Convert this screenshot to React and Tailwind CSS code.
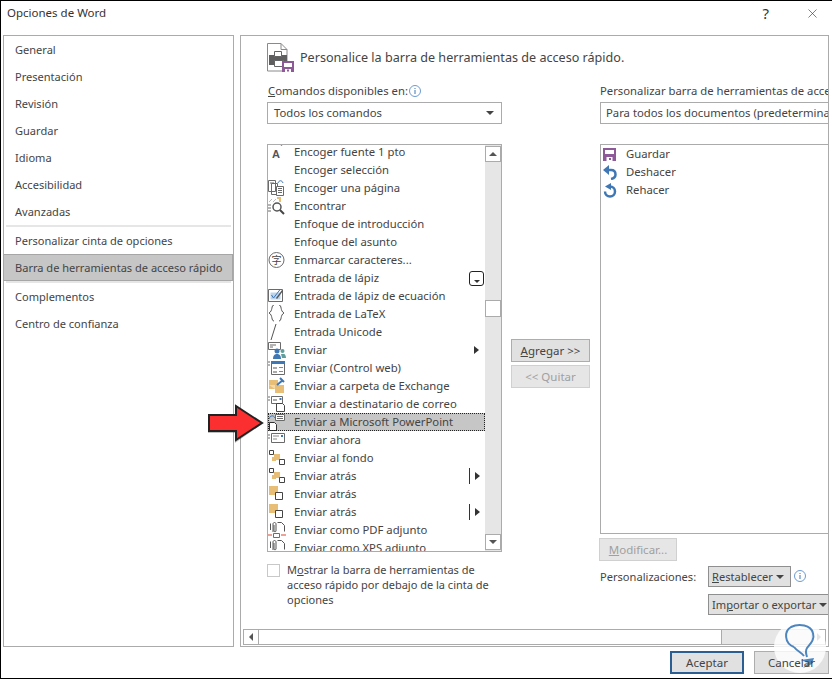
import { X } from 'lucide-react';

const navTop = ['General', 'Presentación', 'Revisión', 'Guardar', 'Idioma', 'Accesibilidad', 'Avanzadas'];

const rows = [
  { icon: 'fontDown', label: 'Encoger fuente 1 pto' },
  { label: 'Encoger selección' },
  { icon: 'shrink', label: 'Encoger una página' },
  { icon: 'find', label: 'Encontrar' },
  { label: 'Enfoque de introducción' },
  { label: 'Enfoque del asunto' },
  { icon: 'char', label: 'Enmarcar caracteres...' },
  { label: 'Entrada de lápiz', extra: 'drop' },
  { icon: 'equation', label: 'Entrada de lápiz de ecuación' },
  { icon: 'latex', label: 'Entrada de LaTeX' },
  { icon: 'slash', label: 'Entrada Unicode' },
  { icon: 'people', label: 'Enviar', extra: 'arrow' },
  { icon: 'form', label: 'Enviar (Control web)' },
  { icon: 'pin', label: 'Enviar a carpeta de Exchange' },
  { icon: 'docs', label: 'Enviar a destinatario de correo' },
  { icon: 'ppt', label: 'Enviar a Microsoft PowerPoint', active: true },
  { icon: 'now', label: 'Enviar ahora' },
  { icon: 'back', label: 'Enviar al fondo' },
  { icon: 'back', label: 'Enviar atrás', extra: 'split' },
  { icon: 'back2', label: 'Enviar atrás' },
  { icon: 'back2', label: 'Enviar atrás', extra: 'split' },
  { icon: 'pdf', label: 'Enviar como PDF adjunto' },
  { icon: 'xps', label: 'Enviar como XPS adjunto' },
];

function RowIcon({ name }) {
  const g = '#6a6a6a';
  const tan = '#e8bd76';
  const blue = '#3f77b5';
  if (!name) return <span className="w-[18px] h-[18px]" />;
  return (
    <svg width="18" height="18" viewBox="0 0 18 18" fill="none" className="block">
      {name === 'fontDown' && (
        <>
          <text x="4" y="15" fontSize="11" fontWeight="700" fill="#555" fontFamily="Liberation Sans, sans-serif">A</text>
          <path d="M11.500 1h4l-2 2z" fill={blue} />
        </>
      )}
      {name === 'shrink' && (
        <>
          <path d="M.5 1.500h7v11h-7z M3.500 4.500h6v11h-6z" stroke={g} fill="#fff" />
          <path d="M8.500 7.500h7v9h-7z" stroke={g} fill="#fff" />
          <path d="M10 9.500h4M10 11.500h4M10 13.500h4M2 4h4" stroke={g} />
          <path d="M10 4c1-3 4-3 5 0" stroke={blue} />
        </>
      )}
      {name === 'find' && (
        <>
          <path d="M1 5l3-3M5 5l3-3" stroke="#bbb" />
          <path d="M9 1l3 0 0 4" stroke={tan} strokeWidth="2" />
          <path d="M0 8h3M0 11h3M0 14h3" stroke={g} />
          <circle cx="9" cy="10" r="4" stroke="#555" fill="#fff" strokeWidth="1.500" />
          <path d="M12 13l4 4" stroke="#444" strokeWidth="2" />
        </>
      )}
      {name === 'char' && (
        <>
          <circle cx="8.500" cy="9" r="7.500" stroke={g} />
          <text x="3.500" y="13" fontSize="10" fill="#444" fontFamily="Noto Sans CJK SC, sans-serif">字</text>
        </>
      )}
      {name === 'equation' && (
        <>
          <path d="M.5 2.500h14v12H.5z" stroke={g} fill="#fff" />
          <path d="M2.500 5.500h10v7h-10z" fill="#bcd4ec" />
          <path d="M3.500 8l2 3 7-9" stroke={blue} />
          <path d="M8 11l6-8 1 1-6 8z" fill="#555" />
        </>
      )}
      {name === 'latex' && (
        <path d="M6 1C3 1 5 7 1 9c4 2 2 8 5 8M11 1c3 0 1 6 5 8-4 2-2 8-5 8" stroke="#555" transform="translate(0 -1)" />
      )}
      {name === 'slash' && <path d="M8 1L3 17" stroke="#555" />}
      {name === 'people' && (
        <>
          <path d="M.5 1.500h12v7H.5z" stroke={g} fill="#fff" />
          <path d="M2 4h6M2 6h3" stroke={g} />
          <circle cx="9" cy="10" r="2.500" fill={blue} />
          <path d="M5 18c0-4 2-5 4-5s4 1 4 5z" fill={blue} />
          <circle cx="14.500" cy="10" r="2" fill="#5f9e9a" />
          <path d="M13 13h3c1 0 2 2 2 4h-4z" fill="#5f9e9a" />
        </>
      )}
      {name === 'form' && (
        <>
          <path d="M0 3h2M0 6h2" stroke={g} />
          <path d="M3.500 2.500h13v13h-13z" stroke={g} fill="#fff" />
          <path d="M3 2h14v3H3z" fill={blue} />
          <path d="M5 8h4v2H5zM5 12h4v2H5z" fill="#aaa" />
          <path d="M11 8.500h4M11 12.500h4" stroke="#888" />
        </>
      )}
      {name === 'pin' && (
        <>
          <path d="M1 3h9v5h6v8H7v-4H1z" fill={tan} />
          <path d="M1 8l6 4V8z" fill="#f3d9aa" />
          <path d="M9 8l6-5M12 1l4 4" stroke={blue} strokeWidth="2" />
        </>
      )}
      {name === 'docs' && (
        <>
          <path d="M0 2h2M0 5h2" stroke={g} />
          <path d="M3.500 1.500h11v7h-11z" stroke={g} fill="#fff" />
          <path d="M5 4h4v2H5z" fill="#aaa" />
          <path d="M11.500 3h2v2h-2z" fill={blue} />
          <path d="M8.500 8.500h6l2 2v6h-8z" stroke="#444" fill="#fff" />
        </>
      )}
      {name === 'ppt' && (
        <>
          <path d="M7.500 1.500h9v6h-9z" stroke={g} fill="#fff" />
          <path d="M9 3.500h6M9 5.500h6" stroke={g} />
          <path d="M1 6c1-4 5-4 6-1" stroke={blue} />
          <path d="M1.500 9.500h5l2 2v6h-7z" stroke="#333" fill="#fff" />
        </>
      )}
      {name === 'now' && (
        <>
          <path d="M0 4h2M0 7h2" stroke={g} />
          <path d="M3.500 2.500h13v9h-13z" stroke={g} fill="#fff" />
          <path d="M5 5h6M5 8h4" stroke="#888" />
          <path d="M13 4h2v2h-2z" fill={blue} />
        </>
      )}
      {name === 'back' && (
        <>
          <path d="M1.500 1.500h4v4h-4z" stroke="#444" fill="#fff" />
          <path d="M6 5h6v6H6z" fill={tan} />
          <path d="M4 8h4v4H4z" fill={tan} />
          <path d="M11.500 10.500h5v5h-5z" stroke="#444" fill="#fff" />
        </>
      )}
      {name === 'back2' && (
        <>
          <path d="M1 1h9v9H1z" fill={tan} />
          <path d="M7.500 7.500h7v7h-7z" stroke="#444" fill="#fff" />
        </>
      )}
      {(name === 'pdf' || name === 'xps') && (
        <>
          <path d="M5 11V3c0-2 3-2 3 0v7c0 1-2 1-2 0V4" stroke="#555" />
          <path d="M2.500 9V2.500M9.500 1.500h4l3 3v6" stroke="#555" />
          {name === 'pdf' ? (
            <>
              <path d="M0 14h4M13 14h5" stroke="#d9442c" />
              <path d="M5.500 12.500h6v4h-6z" stroke="#d9442c" fill="#fff" />
            </>
          ) : (
            <path d="M6 13h5v4H6z" fill={blue} />
          )}
        </>
      )}
    </svg>
  );
}

function RowExtra({ kind }) {
  if (kind === 'drop') {
    return (
      <span className="absolute left-[201px] top-[2px] w-[15px] h-[15px] rounded-[3px] border border-[#222] flex items-end justify-center pb-[2px] bg-white">
        <span className="w-0 h-0 border-x-[3px] border-x-transparent border-t-[3px] border-t-[#333]" />
      </span>
    );
  }
  if (kind === 'arrow') {
    return <span className="absolute left-[206px] top-[5px] w-0 h-0 border-y-[4px] border-y-transparent border-l-[5px] border-l-[#333]" />;
  }
  if (kind === 'split') {
    return (
      <>
        <span className="absolute left-[201px] top-[1px] w-px h-[16px] bg-[#333]" />
        <span className="absolute left-[207px] top-[5px] w-0 h-0 border-y-[4px] border-y-transparent border-l-[5px] border-l-[#333]" />
      </>
    );
  }
  return null;
}

function ScrollBtn({ dir }) {
  return (
    <div className="h-[16px] border border-[#ababab] bg-white flex items-center justify-center">
      {dir === 'up' ? (
        <span className="w-0 h-0 border-x-[4px] border-x-transparent border-b-[4px] border-b-[#555]" />
      ) : (
        <span className="w-0 h-0 border-x-[4px] border-x-transparent border-t-[4px] border-t-[#555]" />
      )}
    </div>
  );
}

function Caret() {
  return <span className="w-0 h-0 border-x-[4px] border-x-transparent border-t-[4px] border-t-[#444]" />;
}

function Info() {
  return (
    <svg width="12" height="12" viewBox="0 0 12 12" fill="none" className="block">
      <circle cx="6" cy="6" r="5.500" stroke="#6c9bd0" />
      <path d="M6 5v4M6 3v1" stroke="#3f77b5" />
    </svg>
  );
}

function Header() {
  return (
    <svg width="28" height="31" viewBox="0 0 28 31" fill="none" className="block">
      <path d="M.5.500h13.500l6 6v21.500H.5z" stroke="#8a8a8a" fill="#fff" />
      <path d="M14 .500v6h6" stroke="#8a8a8a" />
      <path d="M2 12h18v10H2z" fill="#5f5f5f" />
      <path d="M7.500 8.500h7v5h-7zM7.500 17.500h9v6h-9z" fill="#fff" stroke="#666" />
      <path d="M15 18h12v11H15z" fill="#8d5a97" />
      <path d="M17 20h8v4h-8zM18 26h6v3h-6z" fill="#fff" />
      <path d="M20 26.500h2v2h-2z" fill="#8d5a97" />
    </svg>
  );
}

function NavItem({ label, selected }) {
  return (
    <div className={`h-[27px] flex items-center pl-[11px] ${selected ? 'bg-[#c6c6c6] border border-[#a6a6a6] -ml-px' : ''}`}>
      {label}
    </div>
  );
}

export default function App() {
  return (
    <div
      className="relative w-[832px] h-[679px] overflow-hidden bg-white border-t border-l border-b border-black text-[#444] text-[11.3px] leading-none flex flex-col"
      style={{ fontFamily: '"Noto Sans", sans-serif' }}
    >
      {/* title bar */}
      <div className="h-[34px] shrink-0 flex items-center pl-[6px] pb-[10px] text-[#333] text-[11.500px]">
        <span>Opciones de Word</span>
        <span className="ml-auto mr-[36px] text-[15px]">?</span>
        <X size={15} strokeWidth={1} className="mr-[12px] text-[#333]" />
      </div>

      <div className="flex h-[612px] shrink-0 pl-[2px] pr-[3px] gap-[6px]">
        {/* side nav */}
        <div className="w-[231px] shrink-0 border border-[#ababab] text-[11.050px]">
          {navTop.map((n) => <NavItem key={n} label={n} />)}
          <div className="h-[2px] mx-[2px] bg-[#e6e6e6]" />
          <NavItem label="Personalizar cinta de opciones" />
          <NavItem label="Barra de herramientas de acceso rápido" selected />
          <div className="h-[2px] mx-[2px] bg-[#e6e6e6]" />
          <NavItem label="Complementos" />
          <NavItem label="Centro de confianza" />
        </div>

        {/* main panel */}
        <div className="flex-1 min-w-0 border border-[#ababab] flex flex-col overflow-hidden">
          <div className="flex-1 min-h-0 pl-[26px] pt-[7px]">
            <div className="flex items-center h-[31px]">
              <Header />
              <span className="ml-[5px] text-[12.600px]">Personalice la barra de herramientas de acceso rápido.</span>
            </div>

            <div className="flex mt-[9px]">
              {/* commands column */}
              <div className="w-[235px] shrink-0">
                <div className="h-[15px] flex items-center pl-px gap-[1px]">
                  <span><span className="underline">C</span>omandos disponibles en:</span>
                  <Info />
                </div>
                <div className="mt-[4px] h-[22px] border border-[#ababab] flex items-center pl-[6px] pr-[7px] justify-between">
                  <span>Todos los comandos</span>
                  <Caret />
                </div>

                <div className="mt-[20px] h-[408px] border border-[#ababab] flex overflow-hidden">
                  <div className="w-[217px] shrink-0 -mt-[2px]">
                    {rows.map((r, i) => (
                      <div
                        key={i}
                        className={`relative h-[18px] flex items-center ${r.active ? 'bg-[#c6c6c6] outline-1 -outline-offset-1 outline-dotted outline-[#222]' : ''}`}
                      >
                        <RowIcon name={r.icon} />
                        <span className="ml-[8px] whitespace-nowrap">{r.label}</span>
                        <RowExtra kind={r.extra} />
                      </div>
                    ))}
                  </div>
                  <div className="flex-1 bg-[#e6e6e6] flex flex-col pt-px pb-px">
                    <ScrollBtn dir="up" />
                    <div className="flex-1 pt-[138px]">
                      <div className="h-[17px] bg-white border border-[#ababab]" />
                    </div>
                    <ScrollBtn dir="down" />
                  </div>
                </div>

                <div className="flex mt-[10px]">
                  <span className="w-[13px] h-[13px] border border-[#c8c8c8] shrink-0 mt-[2px]" />
                  <div className="ml-[7px] leading-[15px] w-[215px] text-[11px]">
                    M<span className="underline">o</span>strar la barra de herramientas de acceso rápido por debajo de la cinta de opciones
                  </div>
                </div>
              </div>

              {/* add / remove */}
              <div className="w-[79px] ml-[9px] shrink-0 pt-[256px] flex flex-col gap-[3px] text-[11.500px]">
                <div className="h-[23px] border border-[#adadad] bg-[#e1e1e1] flex items-center justify-center"><span><span className="underline">A</span>gregar &gt;&gt;</span></div>
                <div className="h-[23px] border border-[#d0d0d0] bg-[#e6e6e6] text-[#a0a0a0] flex items-center justify-center">&lt;&lt; Quitar</div>
              </div>

              {/* toolbar column */}
              <div className="ml-[10px] flex-1 min-w-0">
                <div className="h-[15px] flex items-center whitespace-nowrap overflow-hidden">Personalizar barra de herramientas de acceso rápido:</div>
                <div className="mt-[4px] h-[22px] border border-[#ababab] border-r-0 flex items-center pl-[5px] whitespace-nowrap overflow-hidden">
                  Para todos los documentos (predeterminado)
                </div>
                <div className="mt-[20px] h-[390px] border border-[#ababab] border-r-0">
                  <div className="h-[18px] flex items-center pl-px gap-[9px]">
                    <svg width="15" height="15" viewBox="0 0 15 15" className="block"><path d="M1 1h13v13H1z" fill="#8d5a97" /><path d="M3 3h9v4H3zM4.500 10h6v4h-6z" fill="#fff" /><path d="M7 11h2v2H7z" fill="#8d5a97" /></svg>
                    <span>Guardar</span>
                  </div>
                  <div className="h-[18px] flex items-center pl-px gap-[9px]">
                    <svg width="15" height="15" viewBox="0 0 15 15" fill="none" className="block"><path d="M4 5h5c3 0 4.500 2 4.500 4.500S11.500 13.500 9 14" stroke="#3f77b5" strokeWidth="2.500" /><path d="M7 0L1 5l6 5z" fill="#3f77b5" /></svg>
                    <span>Deshacer</span>
                  </div>
                  <div className="h-[18px] flex items-center pl-px gap-[9px]">
                    <svg width="15" height="15" viewBox="0 0 15 15" fill="none" className="block"><path d="M8 3.500A5 5 0 1 1 3 8.500" stroke="#3f77b5" strokeWidth="2.500" /><path d="M9 0v7L3 3.500z" fill="#3f77b5" /></svg>
                    <span>Rehacer</span>
                  </div>
                </div>
                <div className="mt-[4px] w-[78px] h-[23px] -ml-px border border-[#d0d0d0] bg-[#e6e6e6] text-[#a0a0a0] text-[11.500px] flex items-center justify-center"><span><span className="underline">M</span>odificar...</span></div>
                <div className="mt-[5px] flex items-center h-[21px] text-[11.100px]">
                  <span className="w-[108px] shrink-0">Personalizaciones:</span>
                  <div className="w-[83px] h-[21px] border border-[#8f8f8f] bg-[#e1e1e1] flex items-center justify-between pl-[3px] pr-[6px] whitespace-nowrap"><span><span className="underline">R</span>establecer</span><Caret /></div>
                  <span className="ml-[3px] mb-[2px]"><Info /></span>
                </div>
                <div className="mt-[7px] ml-[108px] h-[21px] border border-[#8f8f8f] border-r-0 bg-[#e1e1e1] text-[11.100px] flex items-center justify-between pl-[3px] pr-[1px] whitespace-nowrap"><span>Im<span className="underline">p</span>ortar o exportar</span><Caret /></div>
              </div>
            </div>
          </div>

          {/* horizontal scroll */}
          <div className="h-[16px] mx-[2px] mb-px border border-[#ababab] bg-[#e6e6e6] flex shrink-0">
            <div className="w-[14px] bg-white flex items-center justify-center">
              <span className="w-0 h-0 border-y-[4px] border-y-transparent border-r-[4px] border-r-[#555]" />
            </div>
            <div className="w-[464px] bg-white border-x border-[#ababab]" />
            <div className="ml-auto w-[14px] bg-white border-l border-[#ababab] flex items-center justify-center">
              <span className="w-0 h-0 border-y-[4px] border-y-transparent border-l-[4px] border-l-[#777]" />
            </div>
          </div>
        </div>
      </div>

      {/* footer */}
      <div className="flex justify-end gap-[10px] pt-[4px] text-[11.500px] pr-[3px]">
        <div className="w-[74px] h-[23px] border-2 border-[#2b5f94] bg-[#e1e1e1] flex items-center justify-center">Aceptar</div>
        <div className="w-[75px] h-[23px] border border-[#adadad] bg-[#e1e1e1] flex items-center justify-center">
          <span className="relative z-10">Cancelar</span>
        </div>
      </div>

      {/* annotation arrow */}
      <svg width="60" height="42" viewBox="0 0 60 42" className="absolute left-[204px] top-[402px]" fill="none">
        <path d="M4 15h27V5l24 18-24 17V30H4z" fill="#000" opacity=".25" transform="translate(-1 0)" />
        <path d="M4 12h27V3l26 17-26 17V28H4z" fill="#fb2f2f" stroke="#222" strokeWidth="2" />
      </svg>

      {/* watermark */}
      <svg width="56" height="56" viewBox="0 0 56 56" className="absolute left-[773px] top-[618px]" fill="none">
        <circle cx="26" cy="28" r="26" fill="#fff" fillOpacity=".82" />
        <path d="M20 28C10 24 10 12 17 8c8-4 20-2 22 6 2 7-3 11-6 15-2 3-1 6 0 9" stroke="#4d86bf" strokeWidth="2" />
        <path d="M20 28c3 4 7 5 10 9" stroke="#4d86bf" strokeWidth="2" />
        <path d="M27 41l13-2-2 6-9 4 5-5z" fill="#4d86bf" />
      </svg>
    </div>
  );
}
